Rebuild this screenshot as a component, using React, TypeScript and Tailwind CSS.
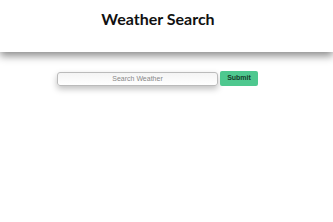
export default function App() {
  return (
    <div className="min-h-screen bg-white" style={{ fontFamily: "Lato, 'Noto Sans', sans-serif" }}>
      <header className="h-[52px] bg-white flex items-center justify-center pr-[17px] shadow-[0_4px_8px_rgba(0,0,0,0.45)]">
        <h1 className="text-[16px] font-bold text-[#111] -mt-[14px]">Weather Search</h1>
      </header>
      <div className="flex justify-center items-center gap-[2px] mt-[19px] pr-[18px]">
        <input
          placeholder="Search Weather"
          className="w-[161px] h-[14px] rounded-[3px] border border-[#bbb] bg-gradient-to-b from-[#f4f4f4] to-white text-center text-[7px] placeholder:text-[#888] shadow-[0_3px_6px_rgba(0,0,0,0.25)] outline-none"
          style={{ fontFamily: "'Liberation Sans', Arial, sans-serif" }}
        />
        <button
          className="w-[38px] h-[15px] rounded-[2px] bg-[#4ec88f] text-[7px] font-bold text-[#153d2a]"
          style={{ fontFamily: "'Liberation Sans', Arial, sans-serif" }}
        >
          Submit
        </button>
      </div>
    </div>
  );
}
